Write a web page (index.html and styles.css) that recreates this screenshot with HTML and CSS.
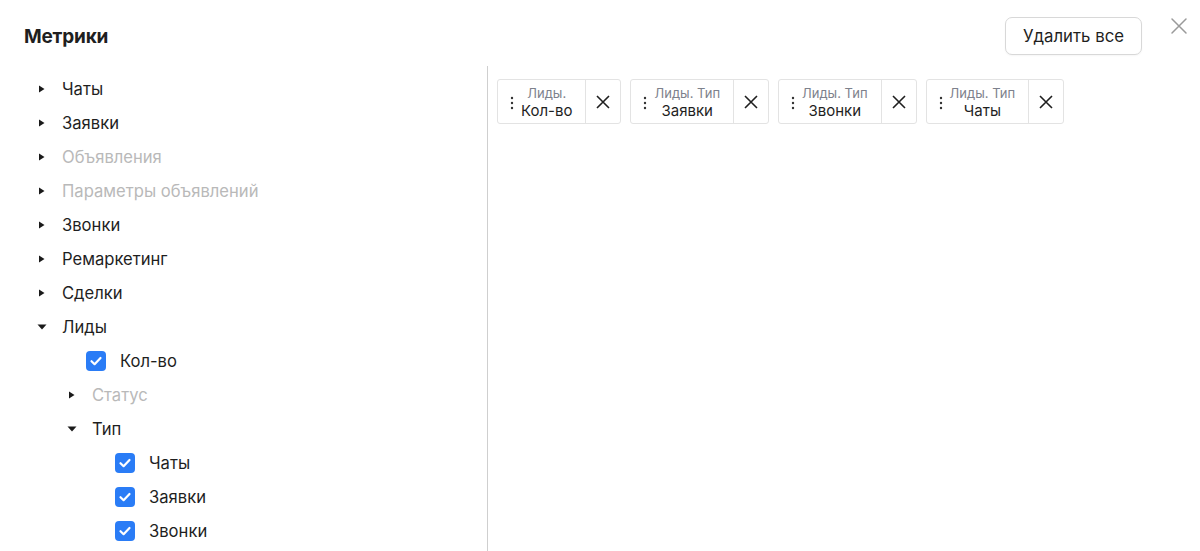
FILE: index.html
```html
<!DOCTYPE html>
<html lang="ru">
<head>
    <meta charset="UTF-8">
    <meta name="viewport" content="width=device-width, initial-scale=1.0">
    <title>Метрики</title>
    <link rel="stylesheet" href="styles.css">
</head>
<body>
    <div class="modal">
        <div class="modal-header">
            <h1 class="modal-title">Метрики</h1>
            <button class="btn-clear" type="button">Удалить все</button>
            <button class="btn-close" type="button" aria-label="Закрыть">
                <svg width="18" height="18" viewBox="0 0 18 18"><path d="M2 2L16 16M16 2L2 16" stroke="currentColor" stroke-width="1.5" fill="none" stroke-linecap="round"/></svg>
            </button>
        </div>

        <div class="modal-body">
            <!-- дерево метрик -->
            <div class="tree">
                <div class="tree-row lvl-0"><span class="caret"><svg width="10" height="10" viewBox="0 0 10 10"><polygon points="2,1.5 7.5,5 2,8.5"/></svg></span><span class="label">Чаты</span></div>
                <div class="tree-row lvl-0"><span class="caret"><svg width="10" height="10" viewBox="0 0 10 10"><polygon points="2,1.5 7.5,5 2,8.5"/></svg></span><span class="label">Заявки</span></div>
                <div class="tree-row lvl-0 disabled"><span class="caret"><svg width="10" height="10" viewBox="0 0 10 10"><polygon points="2,1.5 7.5,5 2,8.5"/></svg></span><span class="label">Объявления</span></div>
                <div class="tree-row lvl-0 disabled"><span class="caret"><svg width="10" height="10" viewBox="0 0 10 10"><polygon points="2,1.5 7.5,5 2,8.5"/></svg></span><span class="label">Параметры объявлений</span></div>
                <div class="tree-row lvl-0"><span class="caret"><svg width="10" height="10" viewBox="0 0 10 10"><polygon points="2,1.5 7.5,5 2,8.5"/></svg></span><span class="label">Звонки</span></div>
                <div class="tree-row lvl-0"><span class="caret"><svg width="10" height="10" viewBox="0 0 10 10"><polygon points="2,1.5 7.5,5 2,8.5"/></svg></span><span class="label">Ремаркетинг</span></div>
                <div class="tree-row lvl-0"><span class="caret"><svg width="10" height="10" viewBox="0 0 10 10"><polygon points="2,1.5 7.5,5 2,8.5"/></svg></span><span class="label">Сделки</span></div>
                <div class="tree-row lvl-0"><span class="caret"><svg width="10" height="10" viewBox="0 0 10 10"><polygon points="0.5,2.5 9.5,2.5 5,7.5"/></svg></span><span class="label">Лиды</span></div>
                <div class="tree-row check-1"><span class="checkbox"><svg width="20" height="20" viewBox="0 0 20 20"><path d="M5.5 10.2L8.6 13.2L14.5 7" stroke="#fff" stroke-width="2.2" fill="none" stroke-linecap="round" stroke-linejoin="round"/></svg></span><span class="label">Кол-во</span></div>
                <div class="tree-row lvl-1 disabled"><span class="caret"><svg width="10" height="10" viewBox="0 0 10 10"><polygon points="2,1.5 7.5,5 2,8.5"/></svg></span><span class="label">Статус</span></div>
                <div class="tree-row lvl-1"><span class="caret"><svg width="10" height="10" viewBox="0 0 10 10"><polygon points="0.5,2.5 9.5,2.5 5,7.5"/></svg></span><span class="label">Тип</span></div>
                <div class="tree-row check-2"><span class="checkbox"><svg width="20" height="20" viewBox="0 0 20 20"><path d="M5.5 10.2L8.6 13.2L14.5 7" stroke="#fff" stroke-width="2.2" fill="none" stroke-linecap="round" stroke-linejoin="round"/></svg></span><span class="label">Чаты</span></div>
                <div class="tree-row check-2"><span class="checkbox"><svg width="20" height="20" viewBox="0 0 20 20"><path d="M5.5 10.2L8.6 13.2L14.5 7" stroke="#fff" stroke-width="2.2" fill="none" stroke-linecap="round" stroke-linejoin="round"/></svg></span><span class="label">Заявки</span></div>
                <div class="tree-row check-2"><span class="checkbox"><svg width="20" height="20" viewBox="0 0 20 20"><path d="M5.5 10.2L8.6 13.2L14.5 7" stroke="#fff" stroke-width="2.2" fill="none" stroke-linecap="round" stroke-linejoin="round"/></svg></span><span class="label">Звонки</span></div>
            </div>

            <!-- выбранные метрики -->
            <div class="selected">
                <div class="chip">
                    <div class="chip-main">
                        <span class="chip-drag"><svg width="4" height="14" viewBox="0 0 4 14"><circle cx="2" cy="2" r="1.2"/><circle cx="2" cy="7" r="1.2"/><circle cx="2" cy="12" r="1.2"/></svg></span>
                        <span class="chip-text"><span class="chip-group">Лиды.</span><span class="chip-name">Кол-во</span></span>
                    </div>
                    <button class="chip-remove" type="button"><svg width="16" height="16" viewBox="0 0 16 16"><path d="M2 2L14 14M14 2L2 14" stroke="currentColor" stroke-width="1.6" fill="none"/></svg></button>
                </div>
                <div class="chip">
                    <div class="chip-main">
                        <span class="chip-drag"><svg width="4" height="14" viewBox="0 0 4 14"><circle cx="2" cy="2" r="1.2"/><circle cx="2" cy="7" r="1.2"/><circle cx="2" cy="12" r="1.2"/></svg></span>
                        <span class="chip-text"><span class="chip-group">Лиды. Тип</span><span class="chip-name">Заявки</span></span>
                    </div>
                    <button class="chip-remove" type="button"><svg width="16" height="16" viewBox="0 0 16 16"><path d="M2 2L14 14M14 2L2 14" stroke="currentColor" stroke-width="1.6" fill="none"/></svg></button>
                </div>
                <div class="chip">
                    <div class="chip-main">
                        <span class="chip-drag"><svg width="4" height="14" viewBox="0 0 4 14"><circle cx="2" cy="2" r="1.2"/><circle cx="2" cy="7" r="1.2"/><circle cx="2" cy="12" r="1.2"/></svg></span>
                        <span class="chip-text"><span class="chip-group">Лиды. Тип</span><span class="chip-name">Звонки</span></span>
                    </div>
                    <button class="chip-remove" type="button"><svg width="16" height="16" viewBox="0 0 16 16"><path d="M2 2L14 14M14 2L2 14" stroke="currentColor" stroke-width="1.6" fill="none"/></svg></button>
                </div>
                <div class="chip">
                    <div class="chip-main">
                        <span class="chip-drag"><svg width="4" height="14" viewBox="0 0 4 14"><circle cx="2" cy="2" r="1.2"/><circle cx="2" cy="7" r="1.2"/><circle cx="2" cy="12" r="1.2"/></svg></span>
                        <span class="chip-text"><span class="chip-group">Лиды. Тип</span><span class="chip-name">Чаты</span></span>
                    </div>
                    <button class="chip-remove" type="button"><svg width="16" height="16" viewBox="0 0 16 16"><path d="M2 2L14 14M14 2L2 14" stroke="currentColor" stroke-width="1.6" fill="none"/></svg></button>
                </div>
            </div>
        </div>
    </div>
</body>
</html>
```

FILE: styles.css
```css
:root {
    --text-color: #1f1f1f;
    --muted-color: #b9b9b9;
    --label-color: #7d818c;
    --border-color: #e3e3e3;
    --divider-color: #cfcfcf;
    --accent-color: #2a7cf6;
}

html, body {
    height: 100%;
}

body {
    font-family: Inter, "Noto Sans", sans-serif;
    color: var(--text-color);
    background-color: #ffffff;
    margin: 0;
    overflow: hidden;
}

.modal {
    display: flex;
    flex-direction: column;
    height: 100%;
}

.modal-header {
    display: flex;
    align-items: center;
    padding: 17px 11px 11px 24px;
}

.modal-title {
    flex: 1;
    margin: 0;
    font-size: 19px;
    font-weight: 700;
    letter-spacing: -0.2px;
}

.btn-clear {
    height: 38px;
    padding: 0 17px;
    font-family: inherit;
    font-size: 16.8px;
    color: var(--text-color);
    background-color: #ffffff;
    border: 1px solid #d8d8d8;
    border-radius: 7px;
    box-shadow: 0 1px 2px rgba(0,0,0,0.04);
    margin-right: 27px;
}

.btn-close {
    width: 20px;
    height: 20px;
    padding: 0;
    border: none;
    background: none;
    color: #9a9a9a;
    display: flex;
    align-items: center;
    justify-content: center;
    margin-top: -20px;
}

.modal-body {
    flex: 1;
    display: flex;
    min-height: 0;
}

/* дерево */

.tree {
    width: 487px;
    padding-top: 6px;
    flex-shrink: 0;
}

.tree-row {
    display: flex;
    align-items: center;
    height: 34px;
    font-size: 16.6px;
}

.tree-row.disabled {
    color: var(--muted-color);
}

.lvl-0 { padding-left: 37px; }
.lvl-1 { padding-left: 67px; }
.check-1 { padding-left: 86px; }
.check-2 { padding-left: 115px; }

.caret {
    width: 25px;
    display: flex;
    align-items: center;
}

.caret svg {
    fill: #1a1a1a;
}

.checkbox {
    width: 20px;
    height: 20px;
    border-radius: 4px;
    background-color: var(--accent-color);
    margin-right: 14px;
    display: flex;
}

/* выбранные */

.selected {
    flex: 1;
    border-left: 1px solid var(--divider-color);
    padding: 13px 9px;
    display: flex;
    align-items: flex-start;
    gap: 9px;
}

.chip {
    display: flex;
    height: 45px;
    border: 1px solid var(--border-color);
    border-radius: 3px;
    box-sizing: border-box;
}

.chip-main {
    display: flex;
    align-items: center;
    padding: 2px 13px 0 10px;
}

.chip-drag {
    width: 8px;
    display: flex;
    justify-content: center;
    margin-right: 5px;
}

.chip-drag svg {
    fill: #333333;
}

.chip-text {
    display: flex;
    flex-direction: column;
    align-items: center;
}

.chip-group {
    font-size: 13px;
    line-height: 16px;
    color: var(--label-color);
}

.chip-name {
    font-size: 15px;
    line-height: 19px;
}

.chip-remove {
    width: 35px;
    padding: 0;
    border: none;
    border-left: 1px solid var(--border-color);
    background: none;
    color: #1f1f1f;
    display: flex;
    align-items: center;
    justify-content: center;
}
```
